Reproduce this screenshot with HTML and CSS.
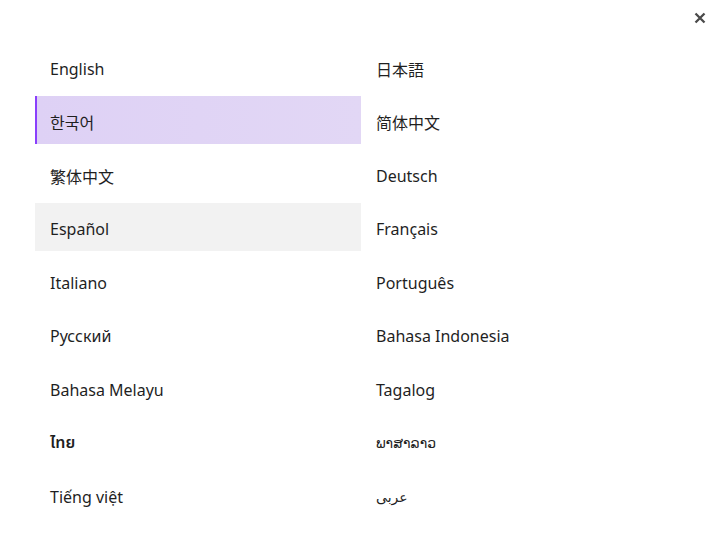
FILE: index.html
```html
<!DOCTYPE html>
<html lang="en">
<head>
<meta charset="utf-8">
<title>Language</title>
<link rel="stylesheet" href="styles.css">
</head>
<body>
<div class="modal">
  <button class="close" aria-label="Close">
    <svg width="12" height="12" viewBox="0 0 12 12"><path d="M1.5 1.5 L10.5 10.5 M10.5 1.5 L1.5 10.5" stroke="#4a4a4a" stroke-width="2.3" stroke-linecap="butt"/></svg>
  </button>
  <ul class="langs">
    <li class="lang">English</li>
    <li class="lang cjk" lang="ja">日本語</li>
    <li class="lang cjk active" lang="ko">한국어</li>
    <li class="lang cjk" lang="zh-CN">简体中文</li>
    <li class="lang cjk" lang="zh-TW">繁体中文</li>
    <li class="lang">Deutsch</li>
    <li class="lang hover">Español</li>
    <li class="lang">Français</li>
    <li class="lang">Italiano</li>
    <li class="lang">Português</li>
    <li class="lang">Русский</li>
    <li class="lang">Bahasa Indonesia</li>
    <li class="lang">Bahasa Melayu</li>
    <li class="lang">Tagalog</li>
    <li class="lang thai" lang="th">ไทย</li>
    <li class="lang lao" lang="lo">ພາສາລາວ</li>
    <li class="lang">Tiếng việt</li>
    <li class="lang arabic" lang="ar">عربى</li>
  </ul>
</div>
</body>
</html>
```
FILE: styles.css
```css
* { box-sizing: border-box; }
html, body {
  margin: 0;
  padding: 0;
  background: #ffffff;
}
body {
  font-family: "Noto Sans", "Noto Sans CJK KR", "DejaVu Sans", sans-serif;
  color: #1f1f1f;
  width: 720px;
  height: 557px;
  overflow: hidden;
}
.modal {
  position: relative;
  padding: 42.5px 33px 0 35px;
}
.close {
  position: absolute;
  top: 12px;
  right: 14px;
  width: 12px;
  height: 12px;
  padding: 0;
  border: 0;
  background: none;
  display: flex;
}
.langs {
  list-style: none;
  margin: 0;
  padding: 0;
  display: grid;
  grid-template-columns: 326px 326px;
  row-gap: 5.5px;
}
.lang {
  height: 48px;
  display: flex;
  align-items: center;
  padding: 4px 0 0 13px;
  font-size: 16px;
  border-left: 2px solid transparent;
}
.cjk { font-family: "Noto Sans CJK KR", "Noto Sans CJK JP", sans-serif; }
.cjk[lang="ja"] { font-family: "Noto Sans CJK JP", sans-serif; }
.cjk[lang="zh-CN"] { font-family: "Noto Sans CJK SC", sans-serif; }
.cjk[lang="zh-TW"] { font-family: "Noto Sans CJK TC", sans-serif; }
.lang.active {
  background: linear-gradient(90deg, #ded1f5 0%, #e2d7f5 100%);
  border-left: 2px solid #8a3ffc;
}
.lang.hover {
  background: #f2f2f2;
}
.thai { font-family: "Noto Sans Thai", "DejaVu Sans", sans-serif; font-weight: 600; }
.lao { font-family: "DejaVu Sans", sans-serif; font-size: 14px; }
.arabic { font-family: "DejaVu Sans", sans-serif; font-size: 14px; }
```
